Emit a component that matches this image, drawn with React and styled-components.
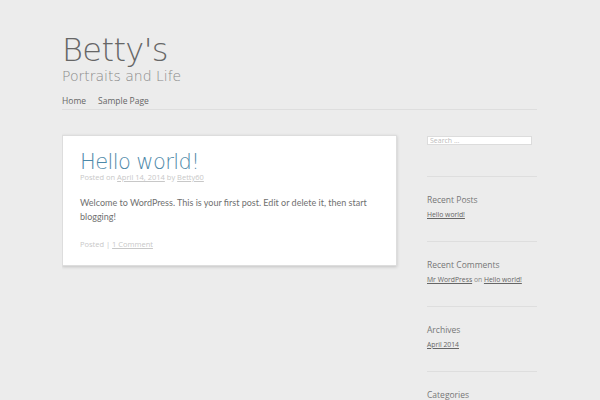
import React from "react";
import styled, { createGlobalStyle } from "styled-components";

const Global = createGlobalStyle`
  html, body { margin: 0; padding: 0; }
  body {
    background: #ececec;
    font-family: "Open Sans", "DejaVu Sans", sans-serif;
    color: #666;
    overflow: hidden;
  }
`;

const Page = styled.div`
  width: 475px;
  margin-left: 62px;
  padding-top: 32px;
  height: 368px;
  overflow: hidden;
`;

const Header = styled.header`
  display: flex;
  flex-direction: column;
`;

const SiteTitle = styled.h1`
  margin: 0;
  font-family: "DejaVu Sans", sans-serif;
  font-weight: 200;
  font-size: 32px;
  line-height: 36px;
  color: #666;
  letter-spacing: -0.6px;
`;

const Tagline = styled.h2`
  margin: 0;
  font-family: "DejaVu Sans", sans-serif;
  font-weight: 200;
  font-size: 14px;
  line-height: 16px;
  color: #8a8a8a;
`;

const Nav = styled.nav`
  display: flex;
  gap: 12px;
  margin-top: 11px;
  padding-bottom: 2px;
  border-bottom: 1px solid #dedede;
`;

const NavLink = styled.a`
  font-size: 8.5px;
  line-height: 12px;
  color: #666;
  text-decoration: none;
`;

const Main = styled.div`
  display: flex;
  gap: 30px;
  margin-top: 25px;
  align-items: flex-start;
`;

const Card = styled.article`
  width: 335px;
  box-sizing: border-box;
  background: #fff;
  border: 1px solid #ddd;
  box-shadow: 0 1px 3px rgba(0, 0, 0, 0.18);
  padding: 15px 17px 16px 17px;
`;

const PostTitle = styled.h1`
  margin: 0;
  font-family: "DejaVu Sans", sans-serif;
  font-weight: 200;
  font-size: 21px;
  line-height: 22px;
  color: #4d88a8;
  letter-spacing: -0.6px;
`;

const Meta = styled.div`
  margin-top: 0;
  font-size: 7.5px;
  line-height: 9px;
  color: #c8c8c8;
`;

const MetaLink = styled.a`
  color: #c8c8c8;
  text-decoration: underline;
`;

const Body = styled.p`
  margin: 13.5px 0 0 0;
  font-family: "Lato", "Open Sans", sans-serif;
  font-size: 9px;
  line-height: 14px;
  color: #707070;
`;

const Footer = styled.div`
  margin-top: 15.5px;
  font-size: 7.5px;
  line-height: 10px;
  color: #c8c8c8;
`;

const Sidebar = styled.aside`
  width: 110px;
  display: flex;
  flex-direction: column;
`;

const SearchBox = styled.input`
  width: 105px;
  height: 9px;
  box-sizing: border-box;
  margin: 1px 0 0 0;
  padding: 0 2px;
  border: 1px solid #dcdcdc;
  background: #fff;
  font-size: 7px;
  line-height: 7px;
  color: #aaa;
  font-family: "Open Sans", sans-serif;
  outline: none;
  &::placeholder { color: #bbb; }
`;

const Widget = styled.section`
  border-top: 1px solid #dedede;
  margin-top: 21px;
  padding-top: 17px;
  &:first-of-type { margin-top: 31px; }
`;

const WidgetTitle = styled.h3`
  margin: 0;
  font-size: 8.5px;
  line-height: 12px;
  font-weight: 400;
  color: #777;
`;

const WidgetItem = styled.div`
  margin-top: 4px;
  font-size: 6.8px;
  line-height: 10px;
  color: #888;
`;

const WLink = styled.a`
  color: #666;
  text-decoration: underline;
`;

export default function App() {
  return (
    <>
      <Global />
      <Page>
        <Header>
          <SiteTitle>Betty's</SiteTitle>
          <Tagline>Portraits and Life</Tagline>
          <Nav>
            <NavLink>Home</NavLink>
            <NavLink>Sample Page</NavLink>
          </Nav>
        </Header>
        <Main>
          <Card>
            <PostTitle>Hello world!</PostTitle>
            <Meta>
              Posted on <MetaLink>April 14, 2014</MetaLink> by <MetaLink>Betty60</MetaLink>
            </Meta>
            <Body>
              Welcome to WordPress. This is your first post. Edit or delete it, then start blogging!
            </Body>
            <Footer>
              Posted | <MetaLink>1 Comment</MetaLink>
            </Footer>
          </Card>
          <Sidebar>
            <SearchBox placeholder="Search …" />
            <Widget>
              <WidgetTitle>Recent Posts</WidgetTitle>
              <WidgetItem><WLink>Hello world!</WLink></WidgetItem>
            </Widget>
            <Widget>
              <WidgetTitle>Recent Comments</WidgetTitle>
              <WidgetItem><WLink>Mr WordPress</WLink> on <WLink>Hello world!</WLink></WidgetItem>
            </Widget>
            <Widget>
              <WidgetTitle>Archives</WidgetTitle>
              <WidgetItem><WLink>April 2014</WLink></WidgetItem>
            </Widget>
            <Widget>
              <WidgetTitle>Categories</WidgetTitle>
            </Widget>
          </Sidebar>
        </Main>
      </Page>
    </>
  );
}
